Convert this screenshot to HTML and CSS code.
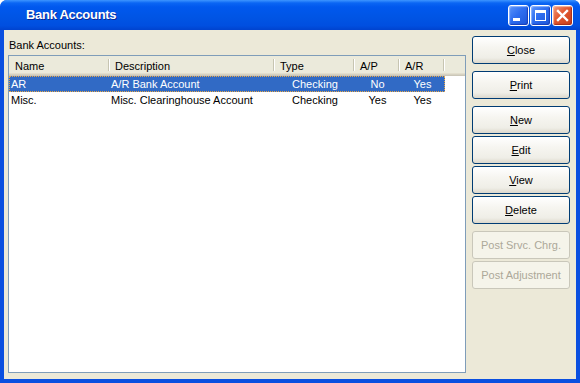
FILE: index.html
```html
<!DOCTYPE html>
<html lang="en">
<head>
  <meta charset="UTF-8">
  <title>Bank Accounts</title>
  <link rel="stylesheet" href="styles.css">
</head>
<body>
  <div class="window">
    <div class="titlebar">
      <span class="title">Bank Accounts</span>
      <div class="caption-buttons">
        <div class="cap-btn cap-min"><span class="min-bar"></span></div>
        <div class="cap-btn cap-max"><span class="max-box"></span></div>
        <div class="cap-btn cap-close">
          <svg width="13" height="13" viewBox="0 0 13 13">
            <path d="M2 2 L11 11 M11 2 L2 11" stroke="#fff" stroke-width="2.4" stroke-linecap="square"/>
          </svg>
        </div>
      </div>
    </div>

    <div class="client">
      <div class="main">
        <div class="label">Bank Accounts:</div>
        <div class="listview">
          <div class="list-header">
            <div class="hcell">Name</div>
            <div class="hcell">Description</div>
            <div class="hcell">Type</div>
            <div class="hcell">A/P</div>
            <div class="hcell">A/R</div>
            <div class="hcell filler"></div>
          </div>
          <div class="row selected">
            <div class="cell">AR</div>
            <div class="cell">A/R Bank Account</div>
            <div class="cell center">Checking</div>
            <div class="cell center">No</div>
            <div class="cell center">Yes</div>
          </div>
          <div class="row">
            <div class="cell">Misc.</div>
            <div class="cell">Misc. Clearinghouse Account</div>
            <div class="cell center">Checking</div>
            <div class="cell center">Yes</div>
            <div class="cell center">Yes</div>
          </div>
        </div>
      </div>

      <div class="buttons">
        <button class="btn"><u>C</u>lose</button>
        <button class="btn sep"><u>P</u>rint</button>
        <button class="btn sep"><u>N</u>ew</button>
        <button class="btn"><u>E</u>dit</button>
        <button class="btn"><u>V</u>iew</button>
        <button class="btn"><u>D</u>elete</button>
        <button class="btn sep" disabled>Post Srvc. Chrg.</button>
        <button class="btn" disabled>Post Adjustment</button>
      </div>
    </div>
  </div>
</body>
</html>
```

FILE: styles.css
```css
* {
  box-sizing: border-box;
}

body {
  margin: 0;
  font-family: "Liberation Sans", Arial, sans-serif;
  font-size: 11px;
  color: #000;
  background: #fff;
}

.window {
  width: 580px;
  height: 383px;
  display: flex;
  flex-direction: column;
  background: #0a4fe0;
  border-radius: 7px 7px 0 0;
  overflow: hidden;
}

.titlebar {
  height: 30px;
  flex: none;
  display: flex;
  align-items: center;
  padding-left: 26px;
  padding-right: 7px;
  background: linear-gradient(to bottom, #3d95ff 0, #0a66f4 3px, #0058ee 7px, #0055e5 55%, #004fe0 85%, #0043cf 100%);
}

.title {
  flex: 1;
  color: #fff;
  font-size: 13px;
  font-weight: bold;
  letter-spacing: -0.3px;
  line-height: 30px;
  text-shadow: 1px 1px 0 #0a2a96;
}

.caption-buttons {
  display: flex;
  gap: 1px;
  margin-top: 1px;
}

.cap-btn {
  width: 21px;
  height: 21px;
  border: 1px solid #fff;
  border-radius: 3px;
  position: relative;
  display: flex;
  align-items: center;
  justify-content: center;
}

.cap-min,
.cap-max {
  background: linear-gradient(135deg, #5c95fa 0, #2f6ef0 45%, #1c55d8 100%);
  box-shadow: inset -1px -1px 1px #1a3fb8, inset 1px 1px 1px #8cb4ff;
}

.cap-close {
  background: linear-gradient(135deg, #f09a7c 0, #e2572f 45%, #c8401c 100%);
  box-shadow: inset -1px -1px 1px #a8301a, inset 1px 1px 1px #f5b8a0;
}

.min-bar {
  position: absolute;
  left: 4px;
  top: 12px;
  width: 7px;
  height: 3px;
  background: #fff;
}

.max-box {
  width: 11px;
  height: 11px;
  border: 1px solid #fff;
  border-top-width: 3px;
}

.client {
  flex: 1;
  display: flex;
  gap: 6px;
  margin: 0 4px 4px 4px;
  padding: 6px 6px 6px 4px;
  background: #ece9d8;
}

.main {
  flex: 1;
  display: flex;
  flex-direction: column;
}

.label {
  margin-top: 3px;
  margin-bottom: 3px;
  line-height: 13px;
  padding-left: 1px;
}

.listview {
  flex: 1;
  background: #fff;
  border: 1px solid #7f9db9;
}

.list-header {
  display: grid;
  grid-template-columns: 100px 165px 80px 45px 45px 1fr;
  height: 20px;
  background: #ebeadb;
  border-bottom: 1px solid #cbc7b8;
  box-shadow: inset 0 -1px 0 #d6d2c2, inset 0 -2px 0 #e2decd;
}

.hcell {
  position: relative;
  padding: 2px 0 0 6px;
  line-height: 16px;
}

.hcell::after {
  content: "";
  position: absolute;
  right: 0;
  top: 3px;
  bottom: 4px;
  width: 1px;
  background: #c7c5b2;
  box-shadow: 1px 0 0 #fff;
}

.hcell.filler::after {
  display: none;
}

.row {
  display: grid;
  grid-template-columns: 100px 165px 80px 45px 45px;
  width: 436px;
  height: 16px;
  line-height: 14px;
  border: 1px solid transparent;
}

.row.selected {
  background: #316ac5;
  color: #fff;
  border: 1px dotted #e8a848;
}

.cell {
  padding-left: 1px;
  white-space: nowrap;
}

.cell.center {
  text-align: center;
  padding-left: 0;
}

.buttons {
  width: 98px;
  display: flex;
  flex-direction: column;
  gap: 2px;
}

.btn {
  height: 28px;
  font-family: inherit;
  font-size: 11px;
  color: #000;
  border: 1px solid #003c74;
  border-radius: 3px;
  background: linear-gradient(to bottom, #ffffff 0, #f6f5f0 40%, #efeee7 80%, #dcd8cc 100%);
  padding: 0;
}

.btn.sep {
  margin-top: 5px;
}

.btn:disabled {
  color: #aca899;
  border-color: #c9c7ba;
  background: #f5f4ea;
}
```
